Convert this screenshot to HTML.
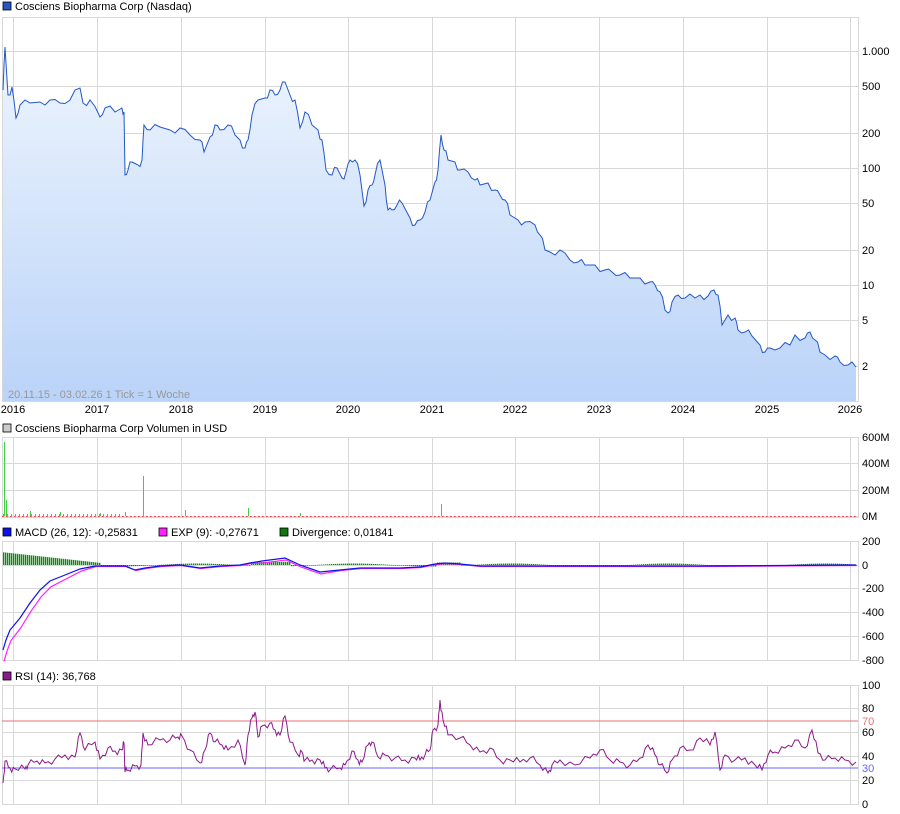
<!DOCTYPE html>
<html><head><meta charset="utf-8"><style>
html,body{margin:0;padding:0;background:#fff}
svg{display:block}
text{font-family:"Liberation Sans",sans-serif;font-size:11px;fill:#000}
</style></head><body>
<svg id="s" width="900" height="814" viewBox="0 0 900 814" xmlns="http://www.w3.org/2000/svg">
<defs>
<linearGradient id="g" x1="0" y1="0" x2="0" y2="1"><stop offset="0" stop-color="#eef5fe"/><stop offset="1" stop-color="#bad3f8"/></linearGradient>
</defs>
<g id="grid" stroke="#d8d8d8" stroke-width="1" fill="none"></g>
<path id="pf" fill="url(#g)" stroke="none"/>
<path id="pl" fill="none" stroke="#2457c5" stroke-width="1"/>
<text x="8" y="398" style="fill:#999">20.11.15 - 03.02.26    1 Tick = 1 Woche</text>
<g id="bars"></g>
<path id="macdp" fill="none" stroke="#ff22ff" stroke-width="1.2"/>
<path id="macdb" fill="none" stroke="#1010ee" stroke-width="1.2"/>
<line x1="2" y1="721" x2="858" y2="721" stroke="#e87070"/>
<line x1="2" y1="768" x2="858" y2="768" stroke="#6666ff"/>
<path id="rsi" fill="none" stroke="#8b1a8b" stroke-width="1"/>
<rect x="3" y="2" width="8" height="8" fill="#2457c5" stroke="#000" stroke-width="0.8"/><text x="15" y="10">Cosciens Biopharma Corp (Nasdaq)</text>
<rect x="3" y="424" width="8" height="8" fill="#ccc" stroke="#000" stroke-width="0.8"/><text x="15" y="432">Cosciens Biopharma Corp Volumen in USD</text>
<rect x="3" y="528" width="8" height="8" fill="#1010ee" stroke="#000" stroke-width="0.8"/><text x="15" y="536">MACD (26, 12): -0,25831</text>
<rect x="159" y="528" width="8" height="8" fill="#ff22ff" stroke="#000" stroke-width="0.8"/><text x="171" y="536">EXP (9): -0,27671</text>
<rect x="280" y="528" width="8" height="8" fill="#117711" stroke="#000" stroke-width="0.8"/><text x="292" y="536">Divergence: 0,01841</text>
<rect x="3" y="672" width="8" height="8" fill="#8b1a8b" stroke="#000" stroke-width="0.8"/><text x="15" y="680">RSI (14): 36,768</text>
<g id="lab"></g>
</svg>
<script>
var S=document.getElementById('s'),NS='http://www.w3.org/2000/svg';
function el(t,a,p){var e=document.createElementNS(NS,t);for(var k in a)e.setAttribute(k,a[k]);(p||S).appendChild(e);return e}
var G=document.getElementById('grid'),L=document.getElementById('lab');
var xs=[13,97,181,265,348,432,515,599,683,767,850],yrs=[2016,2017,2018,2019,2020,2021,2022,2023,2024,2025,2026];
var panels=[[17,401],[437,517],[541,660],[685,804]];
panels.forEach(function(p){el('rect',{x:2.5,y:p[0]+.5,width:856,height:p[1]-p[0]},G);xs.forEach(function(x){el('line',{x1:x+.5,y1:p[0],x2:x+.5,y2:p[1]},G)})});
function hl(ys,labs){ys.forEach(function(y,i){el('line',{x1:2,y1:y+.5,x2:858,y2:y+.5},G);var t=el('text',{x:862,y:y+4},L);t.textContent=labs[i]})}
hl([51,86,133,168,203,250,285,320,366],['1.000','500','200','100','50','20','10','5','2']);
hl([437,463,490,516],['600M','400M','200M','0M']);
hl([541,565,588,612,636,660],['200','0','-200','-400','-600','-800']);
hl([685,708,732,756,780,804],['100','80','60','40','20','0']);
var t=el('text',{x:862,y:725,style:'fill:#e87070'},L);t.textContent='70';
t=el('text',{x:862,y:772,style:'fill:#6666ff'},L);t.textContent='30';
xs.forEach(function(x,i){var t=el('text',{x:x,y:413,'text-anchor':'middle'},L);t.textContent=yrs[i]});
function path(a){return 'M'+a.map(function(p){return p[0]+','+p[1]}).join('L')}
var P=[[3,90],[5,47],[8,95],[12,87],[16,118],[20,105],[30,103],[40,102],[50,100],[60,103],[70,100],[80,88],[83,103],[90,100],[100,117],[105,108],[115,112],[122,108],[124,112],[125,175],[128,170],[132,162],[138,165],[142,160],[144,125],[150,130],[160,127],[170,130],[180,128],[190,135],[200,140],[204,152],[210,137],[215,125],[220,130],[228,125],[235,135],[240,140],[245,148],[248,140],[252,115],[258,100],[265,98],[270,90],[275,95],[280,90],[285,82],[290,95],[295,100],[300,128],[305,112],[312,125],[318,130],[322,140],[326,170],[332,175],[337,168],[342,178],[346,172],[350,160],[355,160],[360,175],[364,206],[368,190],[372,185],[375,175],[380,160],[385,185],[388,210],[392,210],[397,205],[402,203],[410,218],[415,225],[420,220],[425,212],[430,200],[435,182],[438,170],[441,135],[444,150],[448,160],[455,162],[460,170],[468,172],[475,180],[480,185],[488,183],[495,190],[500,195],[505,200],[510,215],[518,220],[525,222],[535,225],[540,235],[545,250],[550,252],[560,250],[570,260],[578,262],[585,265],[595,265],[605,270],[612,272],[620,275],[630,278],[640,278],[650,282],[655,285],[660,292],[665,310],[668,313],[672,302],[678,295],[685,298],[695,298],[700,295],[708,296],[714,290],[718,295],[722,325],[728,315],[735,318],[738,330],[745,332],[752,336],[760,345],[765,352],[770,348],[780,348],[790,345],[795,335],[805,338],[810,332],[815,340],[820,352],[825,355],[835,356],[840,362],[848,365],[856,367]];
var PJ=[];for(var i=0;i<P.length;i++){PJ.push(P[i]);if(i<P.length-1){PJ.push([(P[i][0]+P[i+1][0])/2,(P[i][1]+P[i+1][1])/2+((i*7)%5-2)*2])}}
document.getElementById('pl').setAttribute('d',path(PJ));
document.getElementById('pf').setAttribute('d',path(PJ)+'L856,401L3,401Z');
var B=document.getElementById('bars');
var vol=[[4,442],[6,500],[143,476],[441,504],[248,508],[185,510],[125,512],[60,512],[30,511],[100,513],[300,513]];
el('line',{x1:2,y1:516.5,x2:858,y2:516.5,stroke:'#e44','stroke-dasharray':'2,2'},B);
el('line',{x1:3,y1:516.5,x2:858,y2:516.5,stroke:'#4c4','stroke-dasharray':'1,3'},B);
for(var x=3;x<120;x+=4){el('rect',{x:x,y:514,width:1,height:2,fill:(x%8?'#4c4':'#e44')},B)}
vol.forEach(function(v){el('rect',{x:v[0],y:v[1],width:1,height:516-v[1],fill:'#4c4'},B)});
for(var x=3;x<856;x+=2){var h;if(x<100)h=12*(1-x/110)+1;else h=(Math.sin(x/25)*1.5);if(x>250&&x<290)h=3;if(x>435&&x<460)h=2.5;
 var y=h>0?565-h:565;el('rect',{x:x,y:y,width:1.4,height:Math.max(Math.abs(h),0.6),fill:'#118811'},B)}
var M=[[3,650],[6,640],[10,630],[20,618],[30,603],[40,590],[50,581],[65,575],[80,569],[95,566],[110,566],[125,566],[135,570],[145,568],[160,566],[180,565],[200,568],[220,566],[240,565],[250,563],[262,561],[285,558],[300,565],[320,572],[340,570],[360,568],[380,568],[400,568],[420,567],[435,564],[445,563],[460,564],[480,566],[500,566],[550,566],[700,566],[856,565]];
document.getElementById('macdb').setAttribute('d',path(M));
document.getElementById('macdp').setAttribute('d',path(M.map(function(p){var d=p[0]<90?(90-p[0])*0.12+1:0.5;if(p[0]>250&&p[0]<330)d=2;return [p[0]+1,p[1]+d]})));
var R=[[3,783],[5,761],[10,768],[15,769],[25,769],[28,765],[37,761],[45,763],[55,759],[65,755],[75,757],[80,733],[85,750],[95,742],[100,759],[108,748],[115,751],[122,750],[124,743],[125,772],[128,770],[135,766],[141,765],[143,733],[148,745],[160,740],[170,740],[178,737],[182,736],[190,750],[200,763],[205,750],[210,733],[215,742],[222,745],[228,750],[238,740],[245,765],[248,735],[252,718],[255,712],[258,737],[262,726],[270,723],[275,730],[280,735],[285,716],[290,742],[298,755],[302,752],[305,760],[312,760],[320,760],[325,768],[330,770],[340,768],[345,765],[352,751],[358,760],[362,762],[368,745],[372,742],[378,757],[385,755],[395,758],[405,760],[415,758],[420,760],[425,755],[430,750],[433,730],[438,725],[440,700],[443,720],[448,735],[460,738],[470,745],[480,752],[490,748],[500,760],[510,760],[520,762],[530,758],[540,765],[548,773],[552,765],[560,760],[575,765],[590,758],[600,750],[610,760],[620,762],[630,765],[640,758],[648,745],[655,755],[660,765],[667,773],[672,760],[680,748],[690,750],[700,738],[710,745],[715,732],[720,770],[725,755],[735,760],[745,758],[755,765],[762,770],[768,755],[775,752],[785,748],[795,740],[805,748],[812,730],[818,753],[825,760],[835,758],[845,760],[856,762]];
var RJ=[];for(var i=0;i<R.length;i++){RJ.push(R[i]);if(i<R.length-1){var dx=(R[i+1][0]-R[i][0]);for(var k=1;k<3;k++){RJ.push([R[i][0]+dx*k/3,R[i][1]+(R[i+1][1]-R[i][1])*k/3+(((i*5+k*3)%7)-3)*1.3])}}}
document.getElementById('rsi').setAttribute('d',path(RJ));
</script>
</body></html>
